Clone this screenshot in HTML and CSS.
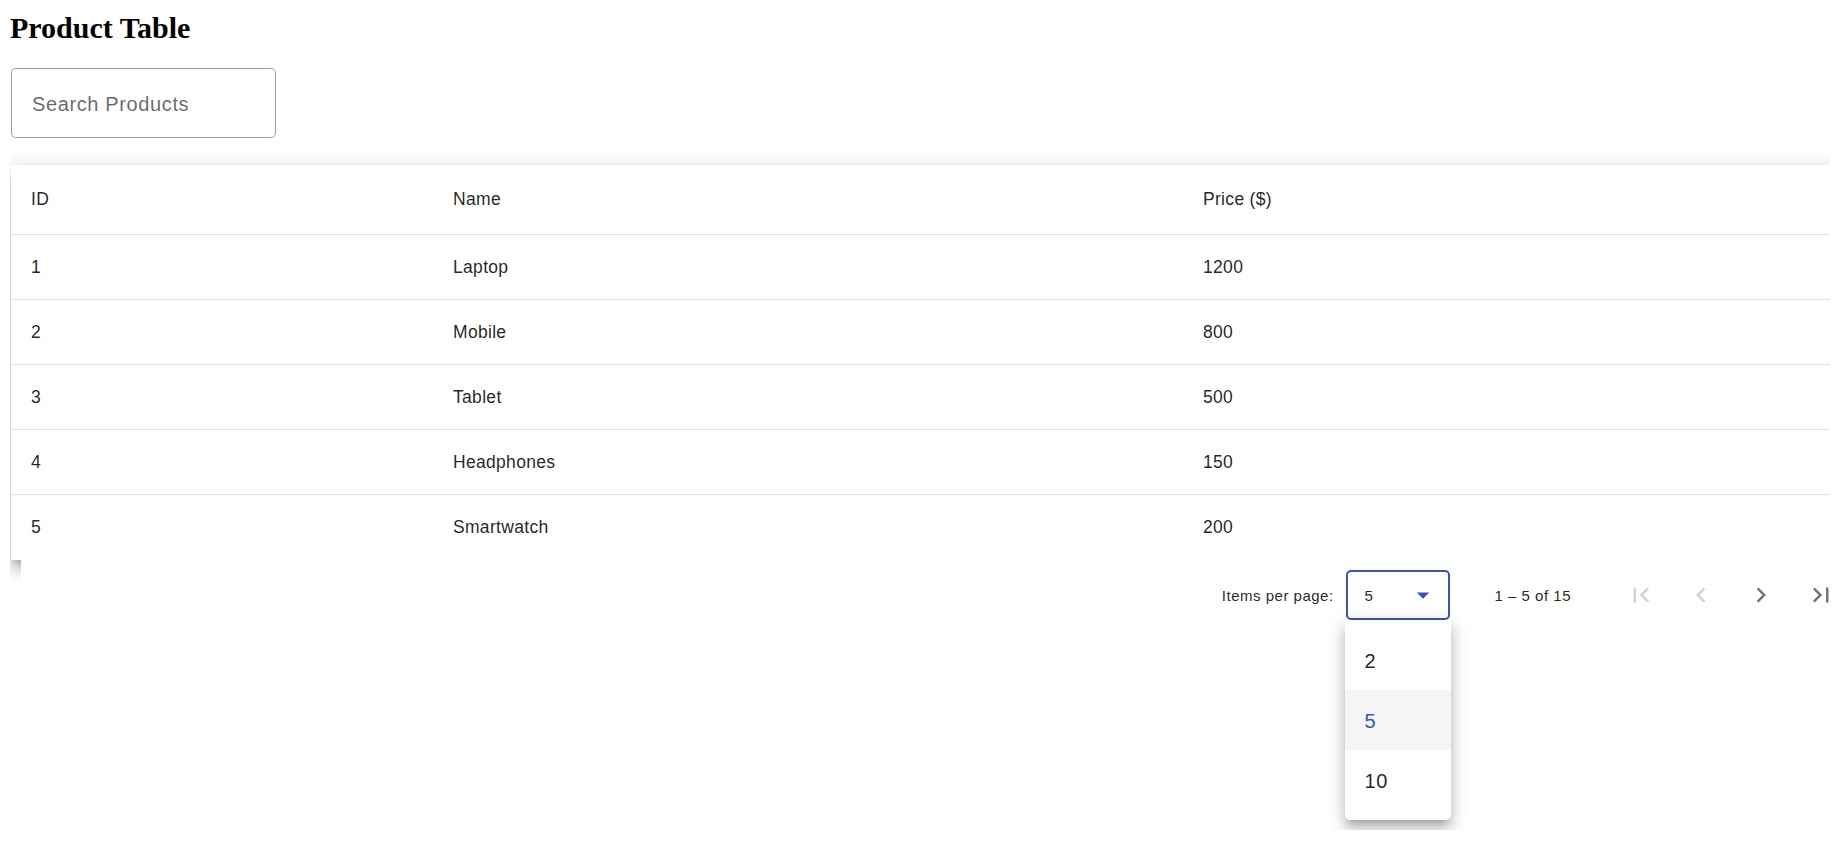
FILE: index.html
```html
<!DOCTYPE html>
<html lang="en">
<head>
    <meta charset="UTF-8">
    <meta name="viewport" content="width=device-width, initial-scale=1.0">
    <title>Product Table</title>
    <link rel="stylesheet" href="styles.css">
</head>
<body>
    <div class="page">
        <h2 class="title">Product Table</h2>

        <div class="search-field">
            <input type="text" class="search-input" placeholder="Search Products">
        </div>

        <div class="table-card">
            <table class="product-table">
                <thead>
                    <tr>
                        <th class="col-id">ID</th>
                        <th class="col-name">Name</th>
                        <th>Price ($)</th>
                    </tr>
                </thead>
                <tbody>
                    <tr><td>1</td><td>Laptop</td><td>1200</td></tr>
                    <tr><td>2</td><td>Mobile</td><td>800</td></tr>
                    <tr><td>3</td><td>Tablet</td><td>500</td></tr>
                    <tr><td>4</td><td>Headphones</td><td>150</td></tr>
                    <tr><td>5</td><td>Smartwatch</td><td>200</td></tr>
                </tbody>
            </table>
        </div>

        <div class="paginator">
            <div class="page-size-label">Items per page:</div>
            <div class="page-size-select">
                <span class="select-value">5</span>
                <svg class="select-arrow" viewBox="0 0 24 24" width="30" height="30"><path d="M7 10l5 5 5-5z"/></svg>

                <!-- open dropdown panel -->
                <div class="select-panel">
                    <div class="select-option">2</div>
                    <div class="select-option selected">5</div>
                    <div class="select-option">10</div>
                </div>
            </div>
            <div class="range-label">1 – 5 of 15</div>
            <div class="range-actions">
                <button class="nav-btn" disabled>
                    <svg viewBox="0 0 24 24" width="30" height="30"><path d="M18.41 16.59L13.83 12l4.58-4.59L17 6l-6 6 6 6zM6 6h2v12H6z"/></svg>
                </button>
                <button class="nav-btn" disabled>
                    <svg viewBox="0 0 24 24" width="30" height="30"><path d="M15.41 7.41L14 6l-6 6 6 6 1.41-1.41L10.83 12z"/></svg>
                </button>
                <button class="nav-btn">
                    <svg viewBox="0 0 24 24" width="30" height="30"><path d="M10 6L8.59 7.41 13.17 12l-4.58 4.59L10 18l6-6z"/></svg>
                </button>
                <button class="nav-btn">
                    <svg viewBox="0 0 24 24" width="30" height="30"><path d="M5.59 7.41L10.18 12l-4.59 4.59L7 18l6-6-6-6zM16 6h2v12h-2z"/></svg>
                </button>
            </div>
        </div>
    </div>
</body>
</html>
```

FILE: styles.css
```css
body {
    margin: 10px;
    min-height: 820px;
    overflow-x: hidden;
    background-color: #fff;
    color: rgba(0, 0, 0, 0.87);
    font-family: "Liberation Sans", Arial, sans-serif;
}
.page {
    width: 1851px;
}
.title {
    font-family: "Liberation Serif", "Times New Roman", serif;
    font-size: 30px;
    font-weight: bold;
    color: #000;
    margin: 0 0 23px 0;
    line-height: 35px;
}

/* search field */
.search-field {
    width: 265px;
    margin-left: 1px;
    margin-bottom: 27px;
}
.search-input {
    display: block;
    width: 100%;
    height: 70px;
    box-sizing: border-box;
    border: 1px solid rgba(0, 0, 0, 0.38);
    border-radius: 5px;
    padding: 2px 20px 0;
    font-family: "Liberation Sans", Arial, sans-serif;
    font-size: 20px;
    letter-spacing: 0.625px;
    color: rgba(0, 0, 0, 0.87);
    outline: none;
}
.search-input::placeholder {
    color: rgba(0, 0, 0, 0.6);
}

/* table */
.table-card {
    margin-left: 1px;
    background-color: #fff;
    box-shadow: 0 6px 6px -4px rgba(0, 0, 0, 0.2),
                0 10px 12px 1px rgba(0, 0, 0, 0.14),
                0 4px 18px 3px rgba(0, 0, 0, 0.12);
}
.product-table {
    width: 100%;
    border-collapse: separate;
    border-spacing: 0;
    font-size: 17.5px;
    letter-spacing: 0.31px;
}
.product-table th,
.product-table td {
    box-sizing: border-box;
    text-align: left;
    padding: 0 20px;
    border-bottom: 1px solid rgba(0, 0, 0, 0.12);
    color: rgba(0, 0, 0, 0.87);
}
.product-table th {
    height: 70px;
    font-weight: normal;
}
.product-table td {
    height: 65px;
}
.product-table tbody tr:last-child td {
    border-bottom: none;
}
.col-id {
    width: 422px;
}
.col-name {
    width: 750px;
}

/* paginator */
.paginator {
    display: flex;
    align-items: center;
    justify-content: flex-end;
    height: 70px;
    margin-left: 11px;
    padding: 0 10px;
    background-color: #fff;
    font-size: 15px;
    letter-spacing: 0.5px;
    color: rgba(0, 0, 0, 0.87);
}
.page-size-label {
    margin: 0 5px;
}
.page-size-select {
    position: relative;
    display: flex;
    align-items: center;
    justify-content: space-between;
    width: 104px;
    height: 50px;
    box-sizing: border-box;
    margin: 0 15px 0 7px;
    padding: 0 10px 0 17px;
    border: 2px solid #3f51b5;
    border-radius: 5px;
}
.select-arrow {
    fill: #3f51b5;
}
.select-panel {
    position: absolute;
    top: 48px;
    left: -3px;
    z-index: 10;
    width: 106px;
    padding: 10px 0;
    background-color: #fff;
    border-radius: 0 0 5px 5px;
    box-shadow: 0 6px 6px -4px rgba(0, 0, 0, 0.2),
                0 10px 12px 1px rgba(0, 0, 0, 0.14),
                0 4px 18px 3px rgba(0, 0, 0, 0.12);
}
.select-option {
    height: 60px;
    line-height: 62px;
    padding-left: 20px;
    font-size: 20px;
    letter-spacing: 0.625px;
    color: rgba(0, 0, 0, 0.87);
}
.select-option.selected {
    background-color: #f5f5f5;
    color: #3f51b5;
}
.range-label {
    margin: 0 40px 0 30px;
}
.range-actions {
    display: flex;
    align-items: center;
}
.nav-btn {
    width: 60px;
    height: 60px;
    padding: 0;
    border: none;
    background: none;
    display: flex;
    align-items: center;
    justify-content: center;
    cursor: pointer;
    fill: rgba(0, 0, 0, 0.54);
}
.nav-btn:disabled {
    fill: rgba(0, 0, 0, 0.18);
    cursor: default;
}
```
